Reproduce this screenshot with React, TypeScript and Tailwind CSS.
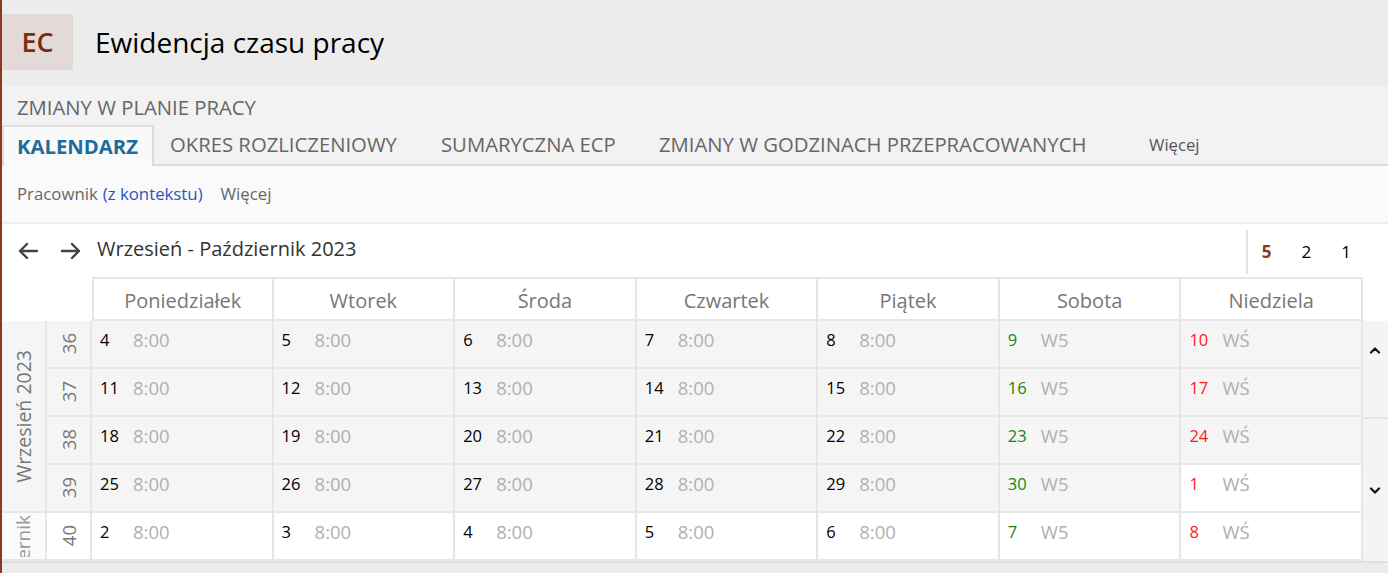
import React from "react";

type Day = { n: number; oct: boolean };

const weeks: { wk: number; days: Day[] }[] = [
  { wk: 36, days: [4, 5, 6, 7, 8, 9, 10].map((n) => ({ n, oct: false })) },
  { wk: 37, days: [11, 12, 13, 14, 15, 16, 17].map((n) => ({ n, oct: false })) },
  { wk: 38, days: [18, 19, 20, 21, 22, 23, 24].map((n) => ({ n, oct: false })) },
  {
    wk: 39,
    days: [25, 26, 27, 28, 29, 30, 1].map((n, i) => ({ n, oct: i === 6 })),
  },
  { wk: 40, days: [2, 3, 4, 5, 6, 7, 8].map((n) => ({ n, oct: true })) },
];

const dayNames = ["Poniedziałek", "Wtorek", "Środa", "Czwartek", "Piątek", "Sobota", "Niedziela"];

function ChevronUp() {
  return (
    <svg width="12" height="8" viewBox="0 0 12 8" fill="none">
      <path d="M2 6.5 L6 2.5 L10 6.5" stroke="#111" strokeWidth="2.2" strokeLinecap="round" strokeLinejoin="round" />
    </svg>
  );
}
function ChevronDown() {
  return (
    <svg width="12" height="8" viewBox="0 0 12 8" fill="none">
      <path d="M2 1.5 L6 5.5 L10 1.5" stroke="#111" strokeWidth="2.2" strokeLinecap="round" strokeLinejoin="round" />
    </svg>
  );
}
function Arrow({ dir }: { dir: "l" | "r" }) {
  return (
    <svg width="22" height="18" viewBox="0 0 22 18" fill="none">
      {dir === "l" ? (
        <path d="M20 9 H3 M10 2 L3 9 L10 16" stroke="#444" strokeWidth="2.4" strokeLinecap="round" strokeLinejoin="round" />
      ) : (
        <path d="M2 9 H19 M12 2 L19 9 L12 16" stroke="#444" strokeWidth="2.4" strokeLinecap="round" strokeLinejoin="round" />
      )}
    </svg>
  );
}

export default function App() {
  return (
    <div className="w-[1388px] h-[573px] overflow-hidden border-l-2 border-[#8b3a22] bg-white font-['Open_Sans','Noto_Sans',sans-serif] flex flex-col">
      {/* Header */}
      <div className="h-[86px] bg-[#ececec] flex items-start pt-[14px] shrink-0">
        <div className="w-[71px] h-[56px] bg-[#e3dad7] flex items-center justify-center text-[27px] font-semibold text-[#7a2e14]">
          EC
        </div>
        <div className="ml-[22px] h-[56px] flex items-center text-[28px] text-black">
          Ewidencja czasu pracy
        </div>
      </div>

      {/* Section title + tabs */}
      <div className="bg-[#f2f2f2] shrink-0 h-[80px] flex flex-col border-b-2 border-[#dcdcdc]">
        <div className="h-[40px] flex items-center pl-[15px] text-[20.3px] text-[#666] pt-[3px]">
          ZMIANY W PLANIE PRACY
        </div>
        <div className="flex h-[40px] items-stretch text-[20.3px] text-[#666]">
          <div className="w-[152px] bg-[#f9f9f9] border-t-2 border-l-2 border-r-2 border-[#dcdcdc] mb-[-2px] flex items-center pl-[13px] font-bold text-[#1d6c9b]">
            KALENDARZ
          </div>
          <div className="w-[271px] flex items-center pl-[16px]">OKRES ROZLICZENIOWY</div>
          <div className="w-[218px] flex items-center pl-[16px]">SUMARYCZNA ECP</div>
          <div className="w-[506px] flex items-center pl-[16px]">ZMIANY W GODZINACH PRZEPRACOWANYCH</div>
          <div className="flex items-center text-[16.7px] text-[#555]">Więcej</div>
        </div>
      </div>

      {/* Filter row */}
      <div className="h-[58px] bg-[#fafafa] shrink-0 flex items-center pl-[15px] text-[16.8px] border-b-2 border-[#eeeeee]">
        <span className="text-[#666]">Pracownik</span>
        <span className="ml-[5px] text-[#1f55c4]">(z kontekstu)</span>
        <span className="ml-[18px] text-[#666]">Więcej</span>
      </div>

      {/* Nav row */}
      <div className="h-[53px] shrink-0 flex items-center">
        <div className="pl-[15px] flex items-center gap-[21px]">
          <Arrow dir="l" />
          <Arrow dir="r" />
        </div>
        <div className="ml-[15px] text-[20px] text-[#333] mb-[3px]">Wrzesień - Październik 2023</div>
        <div className="ml-auto h-[44px] border-l-2 border-[#e2e2e2] flex items-center pl-[14px] pr-[37px] gap-[30px] text-[17px] mt-[2px]">
          <span className="font-bold text-[#8b3a1a]">5</span>
          <span className="text-black">2</span>
          <span className="text-black">1</span>
        </div>
      </div>

      {/* Calendar grid */}
      <div className="grid grid-cols-[45px_45px_repeat(7,minmax(0,1fr))_25px] grid-rows-[44px_repeat(5,48px)] shrink-0">
        <div className="col-span-2 bg-white" />
        {dayNames.map((d, i) => (
          <div
            key={d}
            className={`border-t-2 border-b-2 border-r-2 border-[#e6e6e6] bg-white flex items-center justify-center pt-[3px] text-[20px] text-[#777] ${i === 0 ? "border-l-2" : ""}`}
          >
            {d}
          </div>
        ))}
        <div className="bg-white" />

        {/* Month column Wrzesien */}
        <div className="row-span-4 col-start-1 row-start-2 bg-[#f5f5f5] border-r-2 border-b-2 border-[#e6e6e6] flex items-center justify-center overflow-hidden">
          <span className="[writing-mode:vertical-rl] rotate-180 text-[19.5px] text-[#777] whitespace-nowrap">Wrzesień 2023</span>
        </div>
        {/* Month column Pazdziernik */}
        <div className="col-start-1 row-start-6 bg-[#fbfbfb] border-r-2 border-b-2 border-[#e6e6e6]">
          <div className="h-[44px] overflow-hidden flex items-start justify-center">
            <span className="[writing-mode:vertical-rl] rotate-180 text-[19px] text-[#999] whitespace-nowrap mt-[2px]">Październik</span>
          </div>
        </div>

        {weeks.map((w, ri) => (
          <React.Fragment key={w.wk}>
            <div
              className={`col-start-2 border-r-2 border-b-2 border-[#e6e6e6] flex items-center justify-center ${w.wk === 40 ? "bg-white" : "bg-[#f5f5f5]"}`}
              style={{ gridRowStart: ri + 2 }}
            >
              <span className="[writing-mode:vertical-rl] rotate-180 text-[18.5px] text-[#777]">{w.wk}</span>
            </div>
            {w.days.map((d, ci) => {
              const color = ci === 5 ? "text-[#118811]" : ci === 6 ? "text-[#ff1a1a]" : "text-black";
              const val = ci === 5 ? "W5" : ci === 6 ? "WŚ" : "8:00";
              return (
                <div
                  key={ci}
                  className={`border-r-2 border-b-2 border-[#e6e6e6] flex items-start pt-[7px] pl-[8px] ${d.oct ? "bg-white" : "bg-[#f5f5f5]"}`}
                  style={{ gridRowStart: ri + 2, gridColumnStart: ci + 3 }}
                >
                  <span className={`w-[33px] text-[16.5px] leading-[24px] ${color}`}>{d.n}</span>
                  <span className="text-[18.5px] text-[#b0b0b0] leading-[24px]">{val}</span>
                </div>
              );
            })}
          </React.Fragment>
        ))}

        {/* Scroll column */}
        <div className="col-start-10 row-start-2 row-span-5 bg-[#f4f4f4] flex flex-col">
          <div className="h-[98px] border-b-2 border-[#e6e6e6] flex justify-center pt-[25px]">
            <ChevronUp />
          </div>
          <div className="flex-1 flex justify-center pt-[68px]">
            <ChevronDown />
          </div>
        </div>
      </div>

      <div className="flex-1 bg-[#ececec] border-t-2 border-[#e0e0e0]" />
    </div>
  );
}
